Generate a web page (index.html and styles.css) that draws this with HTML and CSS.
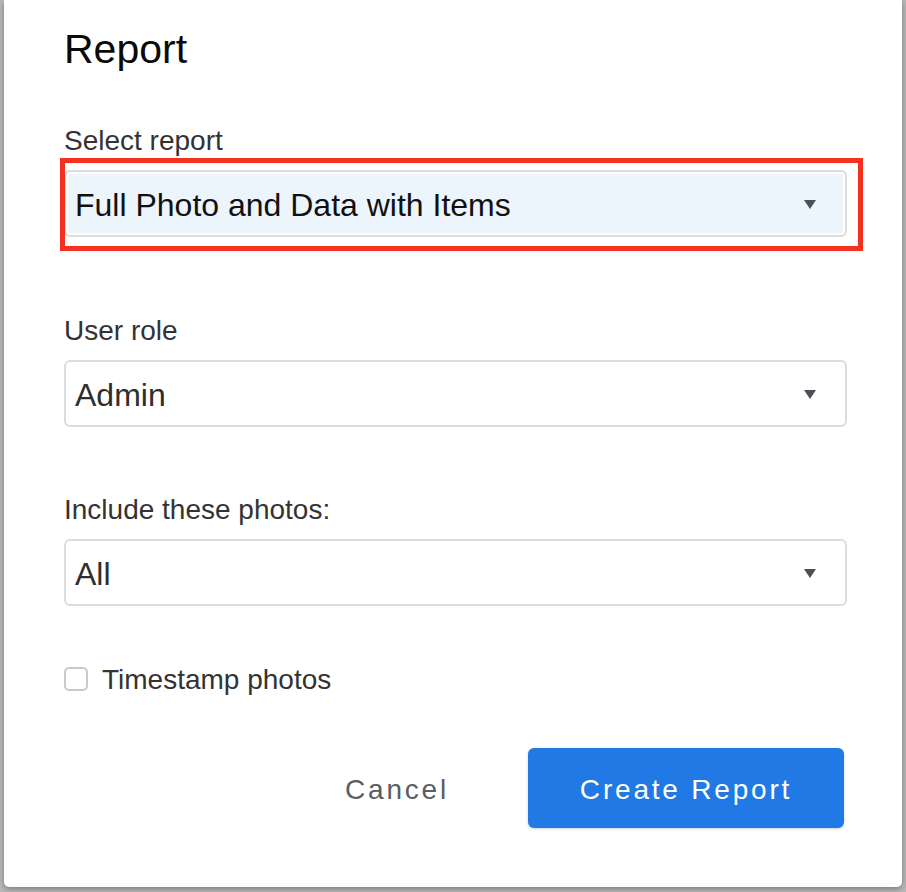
FILE: index.html
```html
<!DOCTYPE html>
<html lang="en">
<head>
<meta charset="utf-8">
<title>Report</title>
<link rel="stylesheet" href="styles.css">
</head>
<body>
<div class="dialog">
  <h1 class="title">Report</h1>

  <div class="field field-first">
    <label class="label">Select report</label>
    <div class="select select-active">
      <span class="select-value">Full Photo and Data with Items</span>
      <svg class="caret" width="12" height="9" viewBox="0 0 12 9"><polygon points="0,0 12,0 6,9" fill="#4b5058"/></svg>
      <div class="highlight"></div>
    </div>
  </div>

  <div class="field field-second">
    <label class="label">User role</label>
    <div class="select">
      <span class="select-value muted">Admin</span>
      <svg class="caret" width="12" height="9" viewBox="0 0 12 9"><polygon points="0,0 12,0 6,9" fill="#4b5058"/></svg>
    </div>
  </div>

  <div class="field">
    <label class="label">Include these photos:</label>
    <div class="select">
      <span class="select-value muted">All</span>
      <svg class="caret" width="12" height="9" viewBox="0 0 12 9"><polygon points="0,0 12,0 6,9" fill="#4b5058"/></svg>
    </div>
  </div>

  <div class="check-row">
    <span class="checkbox"></span>
    <span class="check-label">Timestamp photos</span>
  </div>

  <div class="actions">
    <button class="btn-cancel">Cancel</button>
    <button class="btn-primary">Create Report</button>
  </div>
</div>
</body>
</html>
```

FILE: styles.css
```css
html, body {
  margin: 0;
  padding: 0;
}
body {
  background: #b9b9b9;
  width: 906px;
  height: 892px;
  overflow: hidden;
  font-family: "Liberation Sans", Arial, Helvetica, sans-serif;
}
.dialog {
  box-sizing: border-box;
  margin-left: 4px;
  width: 898px;
  height: 887px;
  background: #ffffff;
  border-radius: 0 0 5px 5px;
  box-shadow: 0 2px 6px rgba(0, 0, 0, 0.35);
  padding: 25px 55px 0 60px;
}
.title {
  margin: 0;
  font-size: 41px;
  font-weight: normal;
  line-height: 48px;
  color: #0a0a0a;
}
.field {
  display: flex;
  flex-direction: column;
}
.field-first {
  margin-top: 50px;
  margin-bottom: 76px;
}
.field-second {
  margin-bottom: 65px;
}
.label {
  font-size: 28px;
  line-height: 32px;
  padding-top: 2px;
  color: #333333;
  margin-bottom: 13px;
}
.select {
  position: relative;
  box-sizing: border-box;
  height: 67px;
  border: 2px solid #dcdcdc;
  border-radius: 6px;
  background: #ffffff;
  display: flex;
  align-items: center;
  justify-content: space-between;
  padding: 0 29px 0 9px;
}
.select-active {
  background: #ecf4fc;
  box-shadow: inset 0 0 0 2px #ffffff;
}
.select-value {
  font-size: 32px;
  line-height: 59px;
  padding-top: 4px;
  color: #111111;
}
.select-value.muted {
  color: #2e2e2e;
}
.caret {
  display: block;
  margin-top: 1px;
}
.highlight {
  position: absolute;
  left: -6px;
  top: -14px;
  width: 803px;
  height: 93px;
  box-sizing: border-box;
  border: 5px solid #f4301f;
  pointer-events: none;
}
.check-row {
  display: flex;
  align-items: center;
  height: 32px;
  margin-top: 57px;
}
.checkbox {
  box-sizing: border-box;
  width: 24px;
  height: 24px;
  border: 2px solid #c9c9c9;
  border-radius: 5px;
  background: #ffffff;
  margin-right: 14px;
}
.check-label {
  font-size: 28px;
  line-height: 32px;
  padding-top: 2px;
  color: #333333;
}
.actions {
  display: flex;
  justify-content: flex-end;
  align-items: center;
  margin-top: 53px;
  margin-right: 3px;
}
.btn-cancel {
  font-family: "Liberation Sans", Arial, sans-serif;
  font-size: 28px;
  letter-spacing: 2.8px;
  color: #5a5d62;
  background: none;
  border: none;
  padding: 4px 0 0 0;
  margin-right: 79px;
  cursor: pointer;
}
.btn-primary {
  font-family: "Liberation Sans", Arial, sans-serif;
  font-size: 28px;
  letter-spacing: 2.8px;
  color: #ffffff;
  background: #2079e4;
  border: none;
  border-radius: 6px;
  width: 316px;
  height: 80px;
  padding: 4px 0 0 0;
  box-shadow: 0 1px 3px rgba(0, 0, 0, 0.18);
  cursor: pointer;
}
```
